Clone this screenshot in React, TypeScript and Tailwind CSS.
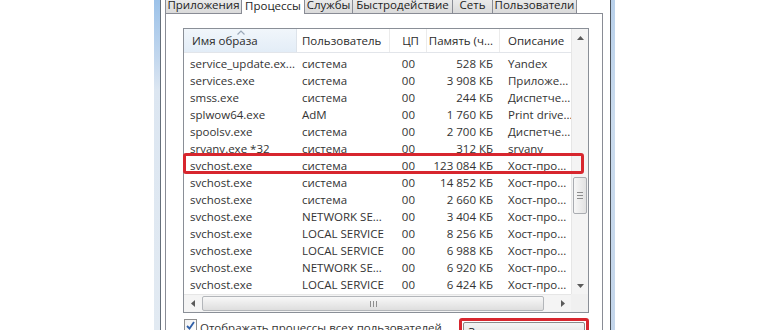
import React from "react";

type Row = [string, string, string, string, string];

const rows: Row[] = [
  ["service_update.ex...", "система", "00", "528 КБ", "Yandex"],
  ["services.exe", "система", "00", "3 908 КБ", "Приложе..."],
  ["smss.exe", "система", "00", "244 КБ", "Диспетче..."],
  ["splwow64.exe", "AdM", "00", "1 760 КБ", "Print drive..."],
  ["spoolsv.exe", "система", "00", "2 700 КБ", "Диспетче..."],
  ["srvany.exe *32", "система", "00", "312 КБ", "srvany"],
  ["svchost.exe", "система", "00", "123 084 КБ", "Хост-про..."],
  ["svchost.exe", "система", "00", "14 852 КБ", "Хост-про..."],
  ["svchost.exe", "система", "00", "2 660 КБ", "Хост-про..."],
  ["svchost.exe", "NETWORK SE...", "00", "3 404 КБ", "Хост-про..."],
  ["svchost.exe", "LOCAL SERVICE", "00", "8 256 КБ", "Хост-про..."],
  ["svchost.exe", "LOCAL SERVICE", "00", "6 988 КБ", "Хост-про..."],
  ["svchost.exe", "NETWORK SE...", "00", "6 920 КБ", "Хост-про..."],
  ["svchost.exe", "LOCAL SERVICE", "00", "6 424 КБ", "Хост-про..."],
];

const tabs = [
  { label: "Приложения", w: "w-[77px]" },
  { label: "Процессы", w: "w-[64px]", active: true },
  { label: "Службы", w: "w-[49px]" },
  { label: "Быстродействие", w: "w-[101px]" },
  { label: "Сеть", w: "w-[41px]" },
  { label: "Пользователи", w: "w-[85px]" },
];

function Arrow({ dir }: { dir: "up" | "down" | "left" | "right" }) {
  const pts = {
    up: "0,4 3.5,0 7,4",
    down: "0,0 3.5,4 7,0",
    left: "4,0 0,3.5 4,7",
    right: "0,0 4,3.5 0,7",
  }[dir];
  const vertical = dir === "up" || dir === "down";
  return (
    <svg width={vertical ? 7 : 4} height={vertical ? 4 : 7} viewBox={vertical ? "0 0 7 4" : "0 0 4 7"}>
      <polygon points={pts} fill="#5a5a5a" />
    </svg>
  );
}

function Header() {
  return (
    <div className="grid grid-cols-[113px_93px_37px_73px_71px] h-[24px] border-b border-[#e2e5ea] text-[#2b2b2b] whitespace-nowrap">
      <div className="relative flex items-center pl-[8px] border-r border-[#dde3ea] bg-gradient-to-b from-[#f1f6fb] to-[#e3edf7]">
        Имя образа
        <svg className="absolute left-[53px] top-[1px]" width="8" height="5" viewBox="0 0 8 5">
          <polyline points="0.5,4.5 4,1 7.5,4.5" fill="none" stroke="#9aa8b8" strokeWidth="1.2" />
        </svg>
      </div>
      <div className="flex items-center pl-[5px] border-r border-[#ebebeb]">Пользователь</div>
      <div className="flex items-center justify-end pr-[7px] border-r border-[#ebebeb]">ЦП</div>
      <div className="flex items-center justify-end pr-[6px] border-r border-[#ebebeb] overflow-hidden">Память (ч...</div>
      <div className="flex items-center pl-[8px]">Описание</div>
    </div>
  );
}

function ListView() {
  return (
    <div className="relative w-[406px] h-[285px] border border-[#8a8f97] flex flex-col bg-white">
      <div className="flex h-[265px]">
        <div className="w-[387px]">
          <Header />
          <div className="pt-[2px]">
            {rows.map((r, i) => (
              <div key={i} className="grid grid-cols-[113px_93px_37px_73px_71px] h-[17px] items-center whitespace-nowrap">
                <div className="pl-[6px] overflow-hidden">{r[0]}</div>
                <div className="pl-[5px] overflow-hidden">{r[1]}</div>
                <div className="text-right pr-[12px]">{r[2]}</div>
                <div className="text-right pr-[7px]">{r[3]}</div>
                <div className="pl-[8px] overflow-hidden">{r[4]}</div>
              </div>
            ))}
          </div>
        </div>
        <div className="w-[17px] flex flex-col bg-[#f4f4f4] border-l border-[#e6e6e6]">
          <div className="h-[17px] flex items-center justify-center">
            <Arrow dir="up" />
          </div>
          <div className="flex-1 pt-[131px] px-[1px]">
            <div className="h-[37px] rounded-[2px] border border-[#a9acb1] bg-gradient-to-r from-[#f7f7f7] to-[#e2e2e2] flex flex-col items-center justify-center gap-[2px]">
              <div className="w-[6px] h-px bg-[#8d8d8d]" />
              <div className="w-[6px] h-px bg-[#8d8d8d]" />
              <div className="w-[6px] h-px bg-[#8d8d8d]" />
            </div>
          </div>
          <div className="h-[17px] flex items-center justify-center">
            <Arrow dir="down" />
          </div>
        </div>
      </div>
      <div className="flex h-[18px]">
        <div className="w-[387px] flex items-center bg-[#f4f4f4] border-t border-[#e6e6e6]">
          <div className="w-[17px] h-full flex items-center justify-center">
            <Arrow dir="left" />
          </div>
          <div className="ml-[1px] w-[342px] h-[15px] rounded-[2px] border border-[#b3b6ba] bg-gradient-to-b from-[#f8f8f8] to-[#dedede] flex items-center justify-center gap-[2px]">
            <div className="w-px h-[6px] bg-[#8d8d8d]" />
            <div className="w-px h-[6px] bg-[#8d8d8d]" />
            <div className="w-px h-[6px] bg-[#8d8d8d]" />
          </div>
          <div className="flex-1 h-full flex items-center justify-center pl-[10px]">
            <Arrow dir="right" />
          </div>
        </div>
        <div className="w-[17px] bg-[#f0f0f0]" />
      </div>
      {/* red highlight round svchost row */}
      <div className="absolute left-[-1px] top-[124px] w-[401px] h-[21px] border-[3px] border-[#d7262e] rounded-[3px]" />
    </div>
  );
}

export default function App() {
  return (
    <div className="w-[770px] h-[330px] overflow-hidden bg-white flex font-['Open_Sans',sans-serif] text-[11.5px] text-[#333]">
      <div className="w-[154px] shrink-0" />
      <div className="w-[461px] shrink-0 flex">
        <div className="w-[6px] bg-[linear-gradient(to_bottom,#9cc2e9_0px,#c4d8ee_60px,#dce6f1_90px,#e2eaf2_330px)]" />
        <div className="w-px bg-[#66707b]" />
        <div className="w-[449px] bg-white pl-[4px] pr-[7px]">
          <div className="-mt-[8px]">
            <div className="relative z-10 flex items-end h-[21px] text-[#1e1e1e] whitespace-nowrap">
              {tabs.map((t, i) =>
                t.active ? (
                  <div
                    key={t.label}
                    className={`${t.w} h-[22px] -mb-px -ml-px bg-white border border-b-0 border-[#898c95] flex items-center justify-center pt-[5px]`}
                  >
                    {t.label}
                  </div>
                ) : (
                  <div
                    key={t.label}
                    className={`${t.w} h-[21px] ${i > 0 ? "-ml-px" : ""} border border-b-0 border-[#898c95] bg-gradient-to-b from-[#f3f3f3] to-[#dadada] flex items-center justify-center pt-[4px]`}
                  >
                    {t.label}
                  </div>
                )
              )}
            </div>
            <div className="border border-[#898c95] bg-white h-[400px] pl-[17px] pt-[14px]">
              <ListView />
              <div className="w-[406px] flex items-start mt-[6px]">
                <div className="flex items-start pl-[1px]">
                  <div className="w-[13px] h-[13px] border border-[#8f8f8f] bg-gradient-to-br from-[#f0f0f0] to-[#ffffff] flex items-center justify-center">
                    <svg width="9" height="9" viewBox="0 0 9 9">
                      <polyline points="1,5 3.5,7.5 8,1" fill="none" stroke="#2f5fa8" strokeWidth="1.8" />
                    </svg>
                  </div>
                  <span className="ml-[3px]">Отображать процессы всех пользователей</span>
                </div>
                <div className="ml-auto relative w-[130px] h-[28px] -mt-px border-[3px] border-[#d7262e] rounded-[3px] p-[1px]">
                  <div className="h-full rounded-[2px] border border-[#8a8a8a] bg-gradient-to-b from-[#f4f4f4] to-[#dcdcdc] flex justify-center text-[#1e1e1e]">
                    Завершить процесс
                  </div>
                </div>
              </div>
            </div>
          </div>
        </div>
        <div className="w-px bg-[#4c535b]" />
        <div className="w-[4px] bg-[linear-gradient(to_bottom,#b8d0ea_0px,#cadbed_120px,#c3d5ea_330px)]" />
      </div>
    </div>
  );
}
